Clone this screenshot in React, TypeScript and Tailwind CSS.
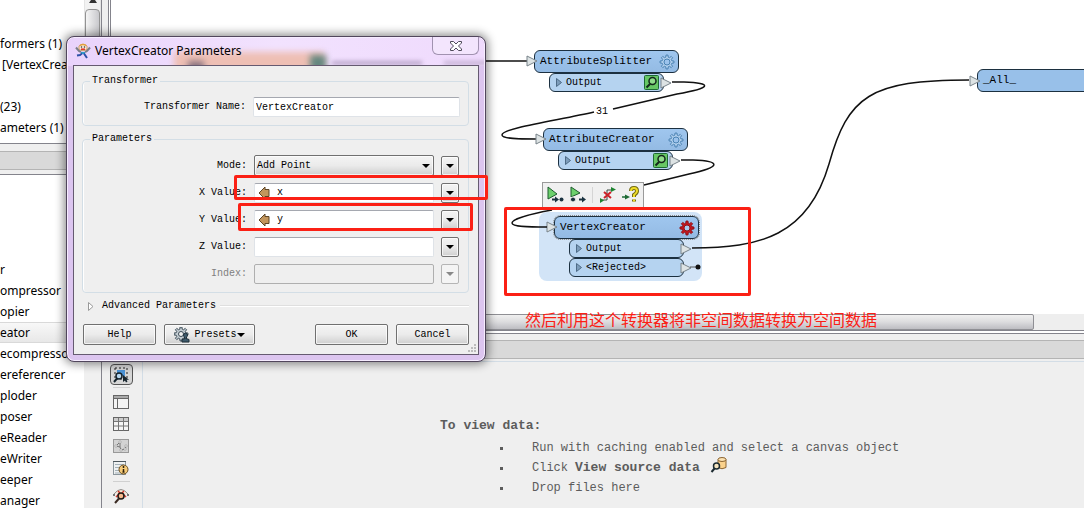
import React from 'react';

const MONO = "font-['Liberation_Mono','Noto_Sans_CJK_SC',monospace]";
const SANS = "font-['Noto_Sans','Open_Sans',sans-serif]";

// Outline of a cog wheel centred on (cx, cy)
const gearPath = (cx: number, cy: number, outer: number, inner: number, teeth = 8) => {
  const points: string[] = [];
  const step = (Math.PI * 2) / teeth;
  for (let i = 0; i < teeth; i++) {
    const a = i * step - Math.PI / 2;
    [
      [inner, -0.3],
      [outer, -0.18],
      [outer, 0.18],
      [inner, 0.3],
    ].forEach(([r, k]) => {
      points.push(`${(cx + r * Math.cos(a + k * step)).toFixed(2)} ${(cy + r * Math.sin(a + k * step)).toFixed(2)}`);
    });
  }
  return `M${points.join('L')}Z`;
};

/* ---------- Icons ---------- */

const RunnerIcon = () => (
  <svg width="16" height="16" viewBox="0 0 16 16" className="shrink-0">
    <path d="M1 4.500 4 8l2 1M15 4.500 12 8l-2 1" stroke="#7b7f88" strokeWidth="2" fill="none" />
    <path d="M4 3Q8-0.500 12 3v3Q8 9.500 4 6Z" fill="#fbeedd" stroke="#cf9a60" />
    <path d="M5 2.500Q8 0.500 11 2.500" stroke="#e2a13c" strokeWidth="1.500" fill="none" />
    <circle cx="6.500" cy="4" r="0.800" fill="#333" />
    <circle cx="9.500" cy="4" r="0.800" fill="#333" />
    <path d="M6 6.200h4" stroke="#e03020" strokeWidth="1.500" />
    <path d="M6 9h4v2H6Z" fill="#2f9cc8" />
    <path d="M9 10.500l3 4.500M7 10.500 5 12l-3 .500" stroke="#2d50a8" strokeWidth="2" fill="none" />
  </svg>
);

const CaretDown = ({ muted = false }: { muted?: boolean }) => (
  <svg width="8" height="4" viewBox="0 0 8 4" className="shrink-0">
    <path d="M0 0h8L4 4Z" fill={muted ? '#888' : '#000'} />
  </svg>
);

const AttributeArrow = () => (
  <svg width="12" height="14" viewBox="0 0 12 14" className="shrink-0">
    <path d="M1 7 7 1v2.500h4v7H7V13Z" fill="#c2955c" stroke="#5d4526" />
  </svg>
);

const PresetsIcon = () => (
  <svg width="16" height="16" viewBox="0 0 16 16" className="shrink-0">
    <path d={gearPath(7, 7, 7, 5)} fill="#c3ccd2" stroke="#3c4c57" />
    <circle cx="7" cy="7" r="2.500" fill="#f2f2f2" stroke="#3c4c57" />
    <path d="M8 15v-2.500l3-1-1-2a2 2 0 1 1 3 0l-1 2 3 1V15Z" fill="#3e5a6c" stroke="#1e2e38" />
  </svg>
);

const InspectIcon = () => (
  <svg width="16" height="16" viewBox="0 0 16 16" className="absolute right-[3px] top-px">
    <rect x="0.500" y="0.500" width="14" height="14" rx="1" fill="#67c765" stroke="#1d6a34" />
    <circle cx="8.500" cy="6" r="3.500" fill="#8fdc8a" stroke="#14281c" strokeWidth="1.500" />
    <path d="M6 9 2.500 12.500" stroke="#14281c" strokeWidth="2" />
  </svg>
);

const SelectInspectIcon = () => (
  <svg width="16" height="16" viewBox="0 0 16 16">
    <rect x="4" y="3" width="8" height="6" fill="#4b94d8" />
    <rect x="2" y="1" width="12" height="11" fill="none" stroke="#222" strokeDasharray="2 2" />
    <circle cx="6" cy="9" r="3" fill="#b7d7ef" stroke="#15232c" strokeWidth="1.500" />
    <path d="M4 11.500 1 15" stroke="#15232c" strokeWidth="2" />
    <path d="M10 8v7l2-1.500 1 2 1.500-1-1-1.800H16Z" fill="#15232c" />
  </svg>
);

const WindowIcon = () => (
  <svg width="16" height="16" viewBox="0 0 16 16">
    <rect x="0.500" y="1.500" width="15" height="13" fill="#f4f4f4" stroke="#666" />
    <path d="M1 3h14" stroke="#aaa" strokeWidth="2" />
    <path d="M1 4.500h14M4.500 5v9.500" stroke="#666" />
  </svg>
);

const TableIcon = () => (
  <svg width="16" height="16" viewBox="0 0 16 16">
    <rect x="0.500" y="1.500" width="15" height="13" fill="#f6f6f6" stroke="#666" />
    <path d="M1 3.500h14" stroke="#ccc" strokeWidth="3" />
    <path d="M1 5.500h14M1 10h14M5.500 2v12.500M10.500 2v12.500" stroke="#777" />
  </svg>
);

const GraphicsIcon = () => (
  <svg width="16" height="16" viewBox="0 0 16 16">
    <rect x="0.500" y="1.500" width="15" height="13" fill="#d3d3d3" stroke="#999" />
    <path d="M7 4 3 8l4 1 1 3 4-1 1-3M7 4v5" fill="none" stroke="#777" />
    <path d="M2 7h2v2H2zM6 3h2v2H6zM12 7h2v2h-2zM11 10h2v2h-2zM7 11h2v2H7z" fill="#f6f6f6" stroke="#888" strokeWidth="0.500" />
  </svg>
);

const InfoTableIcon = () => (
  <svg width="16" height="16" viewBox="0 0 16 16">
    <rect x="0.500" y="1.500" width="12" height="13" fill="#eef1f2" stroke="#8b969c" />
    <path d="M0 1.500h13" stroke="#4c565c" />
    <path d="M2 4.500h9M2 7.500h9M2 10.500h9M2 13h9" stroke="#a5b1b8" />
    <circle cx="10.500" cy="9.500" r="4.500" fill="#f6cb78" stroke="#6b4f22" />
    <path d="M10.500 6v2M10.500 9v3M9.500 12h2" stroke="#2b1f0c" strokeWidth="1.500" />
  </svg>
);

const InspectorIcon = () => (
  <svg width="16" height="16" viewBox="0 0 16 16">
    <path d="M1 6Q8-3 15 6" fill="#f7e6d6" stroke="#8d8d8d" />
    <path d="M1 6v2M15 6v2" stroke="#777" strokeWidth="2" />
    <path d="M5 3l2 2M11 3 9 5M3 9l2-2M13 9l-2-2" stroke="#dc3527" strokeWidth="1.500" />
    <circle cx="8" cy="8" r="3" fill="#f6b98d" stroke="#1f1714" strokeWidth="1.500" />
    <path d="M6 10.500 2 15" stroke="#3a2a22" strokeWidth="2" />
  </svg>
);

const SourceDataIcon = () => (
  <svg width="17" height="16" viewBox="0 0 16 16" className="-mt-1.5 ml-2.5 shrink-0">
    <path d="M7.500 2.500v8q4 2.500 8 0v-8Z" fill="#fbd28c" stroke="#8b6430" />
    <ellipse cx="11.500" cy="2.500" rx="4" ry="2" fill="#fde3b3" stroke="#8b6430" />
    <circle cx="6" cy="9" r="3" fill="#f5e4bf" stroke="#1c2a30" strokeWidth="1.500" />
    <path d="M4 11.500 1 15" stroke="#1c2a30" strokeWidth="2" />
  </svg>
);

/* ---------- Left column ---------- */

const treeRows = ['formers (1)', '[VertexCreator', '', '(23)', 'ameters (1)'];

const transformerNames = [
  'r',
  'ompressor',
  'opier',
  'eator',
  'ecompressor',
  'ereferencer',
  'ploder',
  'poser',
  'eReader',
  'eWriter',
  'eeper',
  'anager',
];

const Sidebar = () => (
  <aside className={`flex h-full w-[102px] shrink-0 flex-col border-r border-[#84848c] bg-[#efefef] text-xs text-black ${SANS}`}>
    <div className="flex h-36 shrink-0 border-b border-[#84848c] bg-white">
      <ul className="min-w-0 flex-1 pt-[33px]">
        {treeRows.map((row, i) => (
          <li key={i} className={`h-[21px] whitespace-nowrap leading-[21px] ${row.startsWith('[') ? 'pl-0.5' : ''}`}>
            {row}
          </li>
        ))}
      </ul>
      <div className="flex w-[17px] flex-col border-x border-[#e4e4e4] bg-[#f2f2f2]">
        <div className="flex h-[9px] justify-center">
          <svg width="8" height="4" viewBox="0 0 8 4">
            <path d="M2 0h4l2 3H0Z" fill="#333" />
          </svg>
        </div>
        <div className="flex-1 rounded-sm border border-[#939393] bg-linear-to-r from-[#f5f5f5] to-[#c9c9cd]" />
      </div>
    </div>
    <div className="mt-[7px] h-[19px] shrink-0 border-y border-[#b4b4b4] bg-[#d9d9d9]" />
    <div className="mt-1 flex min-h-0 flex-1 border-t border-[#84848c]">
      <ul className="min-w-0 flex-1 bg-white pt-[84px]">
        {transformerNames.map((name) => (
          <li
            key={name}
            className={
              name === 'eator'
                ? 'h-[21px] border-y border-[#d9d9d9] bg-linear-to-b from-[#f8f8f8] to-[#e8e8e8] leading-[19px]'
                : 'h-[21px] pt-0.5 leading-[17px]'
            }
          >
            {name}
          </li>
        ))}
      </ul>
      <div className="w-[17px] bg-[#f0f0f0]" />
    </div>
  </aside>
);

/* ---------- Workspace canvas ---------- */

const PortArrow = ({ className }: { className: string }) => (
  <svg width="12" height="12" viewBox="0 0 12 12" className={`absolute ${className}`}>
    <path d="M1 1v10l10-5Z" fill="#dde3e4" stroke="#78838a" />
  </svg>
);

interface TransformerNodeProps {
  name: string;
  outputs: string[];
  position: string;
  inspect?: boolean;
  selected?: boolean;
}

const TransformerNode: React.FC<TransformerNodeProps> = ({ name, outputs, position, inspect, selected }) => (
  <div className={`absolute w-[145px] ${position}`}>
    {selected && <div className="absolute -bottom-1 -left-[15px] -right-[3px] -top-1 rounded-lg bg-[#d2e4f7]" />}
    <div
      className={`relative flex h-[23px] items-center justify-between rounded-md border border-[#1c3040] bg-linear-to-b from-[#9fc6ee] to-[#94bbe4] pl-[5px] pr-[3px] ${
        selected ? 'outline-1 outline-dotted outline-[#888]' : ''
      }`}
    >
      <span className="pb-0.5 text-[11px] leading-4">{name}</span>
      <svg width="16" height="16" viewBox="0 0 16 16">
        <path d={gearPath(8, 8, 7, 5)} fill={selected ? '#c5161d' : '#b3d1ee'} stroke={selected ? '#8d1218' : '#4981b2'} />
        <circle cx="8" cy="8" r="3" fill={selected ? '#a9cbee' : '#9cc3ec'} stroke={selected ? '#8d1218' : '#4981b2'} />
      </svg>
      <PortArrow className="-left-[9px] top-1" />
    </div>
    {outputs.map((output) => (
      <div
        key={output}
        className="relative ml-[15px] flex h-[19px] w-[115px] items-center rounded-md border border-[#1c3040] bg-[#b5d3f0] pl-1.5 text-[10px]"
      >
        <svg width="6" height="9" viewBox="0 0 6 9" className="mr-1">
          <path d="M0.500 0.500v8l5-4Z" fill="#7d9dbb" stroke="#4e6b86" />
        </svg>
        {output}
        {inspect && <InspectIcon />}
        <PortArrow className="-right-[9px] top-[3px]" />
      </div>
    ))}
  </div>
);

const NodeToolbar = () => (
  <div className="absolute left-[431px] top-[182px] flex h-[26px] w-[102px] items-center justify-around border border-[#9a9a9a] bg-[#f0f0f0]">
    <button aria-label="Run to this">
      <svg width="18" height="18" viewBox="0 0 18 18">
        <path d="M2 1v12l9-5Z" fill="#6cd06c" stroke="#1d5b2d" />
        <path d="M6 13.500h5" stroke="#1a3240" strokeWidth="2" />
        <path d="M9 10.500v6l4-3Z" fill="#1a3240" />
        <circle cx="15.500" cy="13.500" r="2" fill="#1a3240" />
      </svg>
    </button>
    <button aria-label="Run from this">
      <svg width="18" height="18" viewBox="0 0 18 18">
        <path d="M2 1v10l9-4Z" fill="#6cd06c" stroke="#1d5b2d" />
        <circle cx="4" cy="13.500" r="2.500" fill="#1a3240" stroke="#f0f0f0" />
        <path d="M10 13.500h4" stroke="#1a3240" strokeWidth="2" />
        <path d="M13 10.500v6l4-3Z" fill="#1a3240" />
      </svg>
    </button>
    <span className="h-4 w-px bg-[#d5d5d5]" />
    <button aria-label="Disconnect">
      <svg width="18" height="18" viewBox="0 0 18 18">
        <path d="M2 14h6V4h5" stroke="#3c4a40" fill="none" />
        <path d="M1 12v5l4-2.500ZM12 1v5l5-2.500Z" fill="#1d8430" />
        <path d="m5 6 7 6M12 6l-7 6" stroke="#cb2229" strokeWidth="2" />
      </svg>
    </button>
    <button aria-label="Help on this transformer">
      <svg width="18" height="18" viewBox="0 0 18 18">
        <path d="M0 11h4" stroke="#1d6a34" strokeWidth="1.500" />
        <path d="M3 8.500v5l5-2.500Z" fill="#1d6a34" />
        <path d="M9 5q0-3 3-3t3 3q0 2-3 4v2M12 13.500v2" stroke="#736b12" strokeWidth="4" fill="none" />
        <path d="M9 5q0-3 3-3t3 3q0 2-3 4v2M12 13.500v2" stroke="#f0dd27" strokeWidth="2" fill="none" />
      </svg>
    </button>
  </div>
);

const Canvas = () => (
  <div className={`relative min-h-0 flex-1 overflow-hidden bg-white ${MONO}`}>
    <TransformerNode name="VertexCreator" outputs={['Output', '<Rejected>']} position="left-[443px] top-[216px]" selected />
    <svg width="973" height="314" viewBox="111 0 973 314" className="absolute left-0 top-0">
      <g fill="none" stroke="#111" strokeWidth="1.500">
        <path d="M400 61H527" />
        <path d="M672 82H684C713 83 712 88 677 94C655 99 635 104 613 109" />
        <path d="M594 112C560 120 502 128 502 135C502 139 520 139 536 139" />
        <path d="M681 160H693C722 161 721 167 689 174L644 185" />
        <path d="M552 210C530 214 512 219 512 223C512 227 530 227 547 227" />
        <path d="M692 248C760 248 808 236 829 164C848 96 870 80 969 80" />
        <path d="M690 267h8" stroke="#555" strokeWidth="1" />
      </g>
      <circle cx="698" cy="267" r="2.500" fill="#111" />
    </svg>
    <span className="absolute left-[485px] top-[105px] text-[10px] leading-[14px]">31</span>
    <TransformerNode name="AttributeSplitter" outputs={['Output']} position="left-[423px] top-[50px]" inspect />
    <TransformerNode name="AttributeCreator" outputs={['Output']} position="left-[432px] top-[128px]" inspect />
    <div className="absolute -right-2 left-[866px] top-[69px] flex h-[23px] items-center rounded-md border border-[#1c3040] bg-[#98c0e9] pl-[5px] text-[11px]">
      _All_
      <PortArrow className="-left-[9px] top-[5px]" />
    </div>
    <NodeToolbar />
  </div>
);

/* ---------- Visual preview ---------- */

const previewTools = [
  [
    { label: 'Window', icon: <WindowIcon /> },
    { label: 'Table', icon: <TableIcon /> },
    { label: 'Graphics', icon: <GraphicsIcon /> },
    { label: 'Feature information', icon: <InfoTableIcon /> },
  ],
  [{ label: 'Open in inspector', icon: <InspectorIcon /> }],
];

const PreviewPanel = () => (
  <section className="flex flex-1 flex-col bg-[#efefef]">
    <div className="mt-[6px] h-[19px] shrink-0 border-y border-[#b4b4b4] bg-[#d9d9d9]" />
    <div className="mt-[2px] flex flex-1 border-t border-[#d3dde6]">
      <div className="flex w-[41px] shrink-0 flex-col items-center border-r border-[#d3dde6] pr-0.5 pt-0.5">
        <button aria-label="Inspect selection" className="flex h-[21px] w-[23px] items-center justify-center rounded-sm border border-[#555] bg-[#d6d6d6]">
          <SelectInspectIcon />
        </button>
        {previewTools.map((group, i) => (
          <div key={i} className="mt-[2px] flex w-[17px] flex-col items-center gap-1.5 border-t border-[#d0d0d0] pb-[3px] pt-[6px]">
            {group.map((tool) => (
              <button key={tool.label} aria-label={tool.label}>
                {tool.icon}
              </button>
            ))}
          </div>
        ))}
      </div>
      <div className={`flex-1 pl-[297px] pt-[54px] text-[#5c5c5c] ${MONO}`}>
        <h2 className="text-[13px] font-bold leading-5">To view data:</h2>
        <ul className="mt-0.5 text-xs leading-5">
          {['Run with caching enabled and select a canvas object', '', 'Drop files here'].map((text, i) => (
            <li key={i} className="flex h-5 items-center pl-[60px]">
              <span className="mr-[29px] size-[3px] bg-[#5c5c5c]" />
              {text || (
                <>
                  <span>Click</span>
                  <b className="ml-[7px] text-[13px]">View source data</b>
                  <SourceDataIcon />
                </>
              )}
            </li>
          ))}
        </ul>
      </div>
    </div>
  </section>
);

/* ---------- Parameters dialog ---------- */

const fieldBox = 'h-5 border border-[#dfe3e8] border-t-[#a5a8b0] bg-white rounded-xs';
const buttonLook = 'rounded-xs border border-[#707070] bg-linear-to-b from-[#f4f4f4] via-[#ebebeb] to-[#cfcfcf] inset-ring inset-ring-white/70';

const OptionButton = ({ label, disabled = false }: { label: string; disabled?: boolean }) => (
  <button
    aria-label={`${label} options`}
    disabled={disabled}
    className={
      disabled
        ? 'flex h-5 w-[18px] items-center justify-center rounded-xs border border-[#b5b5b5] bg-[#f4f4f4]'
        : `flex h-5 w-[18px] items-center justify-center ${buttonLook}`
    }
  >
    <CaretDown muted={disabled} />
  </button>
);

const ParamRow = ({ id, label, disabled = false, children }: { id: string; label: string; disabled?: boolean; children: React.ReactNode }) => (
  <div className="flex h-[21px] items-center">
    <label htmlFor={id} className={`mr-[7px] flex-1 text-right ${disabled ? 'text-[#808080]' : ''}`}>
      {label}
    </label>
    <div className="mr-[7px] w-[180px]">{children}</div>
    <OptionButton label={label} disabled={disabled} />
  </div>
);

const AttributeField = ({ id, value }: { id: string; value: string }) => (
  <div className={`flex items-center pl-[3px] ${fieldBox}`}>
    <AttributeArrow />
    <input id={id} defaultValue={value} className="ml-[7px] min-w-0 flex-1 outline-none" />
  </div>
);

const ParametersDialog = () => (
  <div
    role="dialog"
    aria-labelledby="dialog-title"
    className="absolute left-[66px] top-[36px] w-[420px] overflow-visible rounded-lg border border-[#51465c] bg-[#dcc5ef] px-1.5 pb-1.5 shadow-[0_0_10px_2px_rgba(0,0,0,0.45)] inset-ring inset-ring-[#f6ecff]"
  >
    {/* Glass title bar, with the workspace faintly showing through */}
    <div className="absolute inset-x-px top-px h-7 overflow-hidden rounded-t-md bg-linear-to-r from-[#e9d3fb] via-[#f2e2fe] to-[#efdafd]">
      <div className="absolute left-[106px] top-[14px] h-5 w-[150px] bg-[#eebfb4] blur-[3px]" />
      <div className="absolute left-[242px] top-[17px] h-4 w-[16px] bg-[#64877f] blur-[3px]" />
      <div className="absolute left-[120px] top-[23px] h-3 w-4 bg-[#8a7480] blur-[3px]" />
      <div className="absolute left-[264px] top-[23px] h-1 w-[90px] bg-[#b7a3c7] blur-[2px]" />
      <div className="absolute left-[376px] top-[23px] h-1 w-[46px] bg-[#c5b2d4] blur-[2px]" />
    </div>
    <div className="relative flex h-7 items-start justify-between">
      <div className="flex items-center gap-1 pl-0.5 pt-[5px]">
        <RunnerIcon />
        <h1 id="dialog-title" className={`text-xs leading-[18px] text-black ${SANS}`}>
          VertexCreator Parameters
        </h1>
      </div>
      <button
        aria-label="Close"
        className="flex h-[18px] w-[47px] items-center justify-center rounded-b-md border border-t-0 border-[#a192b0] bg-[#f3e5fd]"
      >
        <svg width="12" height="10" viewBox="0 0 12 10">
          <path d="M0.500 0.500h3L6 3l2.500-2.500h3v1.500L8.500 5l3 3v1.500h-3L6 7 3.500 9.500h-3V8l3-3-3-3Z" fill="#fff" stroke="#4f4a5a" />
        </svg>
      </button>
    </div>

    <div className={`relative border border-[#655a70] bg-[#efefef] pb-[9px] pl-2 pr-[9px] pt-2 text-[10px] leading-[14px] text-black ${MONO}`}>
      <fieldset className="rounded-sm border border-[#d3dee6] pb-2 pr-2 pt-[9px] shadow-[inset_1px_0_#fff]">
        <legend className="ml-[7px] px-0.5">Transformer</legend>
        <div className="flex items-center">
          <label htmlFor="transformer-name" className="mr-[7px] flex-1 text-right">
            Transformer Name:
          </label>
          <input id="transformer-name" defaultValue="VertexCreator" className={`w-[207px] pl-0.5 outline-none ${fieldBox}`} />
        </div>
      </fieldset>

      <fieldset className="mt-1.5 flex flex-col gap-1.5 rounded-sm border border-[#d3dee6] pb-2 pr-[9px] pt-[9px] shadow-[inset_1px_0_#fff]">
        <legend className="ml-[7px] px-0.5">Parameters</legend>
        <ParamRow id="mode" label="Mode:">
          <div className="relative">
            <select id="mode" className={`block h-[21px] w-full appearance-none pl-0.5 ${buttonLook}`}>
              <option>Add Point</option>
            </select>
            <span className="pointer-events-none absolute right-1 top-[9px]">
              <CaretDown />
            </span>
          </div>
        </ParamRow>
        <ParamRow id="x-value" label="X Value:">
          <AttributeField id="x-value" value="x" />
        </ParamRow>
        <ParamRow id="y-value" label="Y Value:">
          <AttributeField id="y-value" value="y" />
        </ParamRow>
        <ParamRow id="z-value" label="Z Value:">
          <input id="z-value" className={`block w-full pl-0.5 ${fieldBox}`} />
        </ParamRow>
        <ParamRow id="index" label="Index:" disabled>
          <input id="index" disabled className="block h-5 w-full rounded-xs border border-[#afafaf] bg-[#efefef]" />
        </ParamRow>
      </fieldset>

      <div className="mt-1.5 flex items-center">
        <button className="flex items-center pl-1.5">
          <svg width="6" height="9" viewBox="0 0 6 9" className="mr-2">
            <path d="M0.500 0.500v8l4.500-4Z" fill="#fff" stroke="#999" />
          </svg>
          Advanced Parameters
        </button>
        <span className="ml-1 h-0.5 flex-1 border-b border-white bg-[#dfdfdf]" />
      </div>

      <div className="mt-[11px] flex gap-2 pl-px">
        <button className={`h-[21px] w-[73px] ${buttonLook}`}>Help</button>
        <button className={`flex h-[21px] w-[91px] items-center justify-center ${buttonLook}`}>
          <PresetsIcon />
          <span className="ml-1">Presets</span>
          <CaretDown />
        </button>
        <button className={`ml-auto h-[21px] w-[73px] ${buttonLook}`}>OK</button>
        <button className={`h-[21px] w-[73px] ${buttonLook}`}>Cancel</button>
      </div>
      <svg width="8" height="8" viewBox="0 0 8 8" className="absolute bottom-0.5 right-0.5">
        <path d="M6 0h2v2H6zM3 3h2v2H3zM6 3h2v2H6zM0 6h2v2H0zM3 6h2v2H3zM6 6h2v2H6z" fill="#bcbcbc" />
      </svg>
    </div>
  </div>
);

/* ---------- Red mark-up over the windows ---------- */

const Annotations = () => (
  <div className="pointer-events-none absolute inset-0">
    <div className="absolute left-[234px] top-[175px] h-[25px] w-[254px] rounded-xs border-3 border-[#fb2015]" />
    <div className="absolute left-[238px] top-[203px] h-[28px] w-[235px] rounded-xs border-3 border-[#fb2015]" />
    <div className="absolute left-[504px] top-[207px] h-[89px] w-[247px] rounded-xs border-3 border-[#fb2015]" />
    <p className="absolute left-[525px] top-[307px] whitespace-nowrap font-['Noto_Sans_CJK_SC',sans-serif] text-base leading-6 text-[#fb2015]">
      然后利用这个转换器将非空间数据转换为空间数据
    </p>
  </div>
);

export default function App() {
  return (
    <div className="relative flex h-screen overflow-hidden bg-[#efefef]">
      <Sidebar />
      <main className="flex min-w-0 flex-1 flex-col">
        <div className="flex h-[334px] shrink-0 border-b border-[#84848c] pl-[6px]">
          <div className="flex min-w-0 flex-1 flex-col border-l border-[#84848c] bg-white pb-[2px] pl-px">
            <div className="flex min-h-0 flex-1 flex-col border-b border-l border-[#84848c]">
              <Canvas />
              <div className="flex h-4 shrink-0 bg-[#eee] pr-[50px]">
                <div className="flex flex-1 rounded-xs border border-[#8f8f94] bg-linear-to-b from-[#f0f0f0] via-[#dcdcde] to-[#bdbdc2]" />
              </div>
            </div>
          </div>
        </div>
        <PreviewPanel />
      </main>
      <ParametersDialog />
      <Annotations />
    </div>
  );
}
